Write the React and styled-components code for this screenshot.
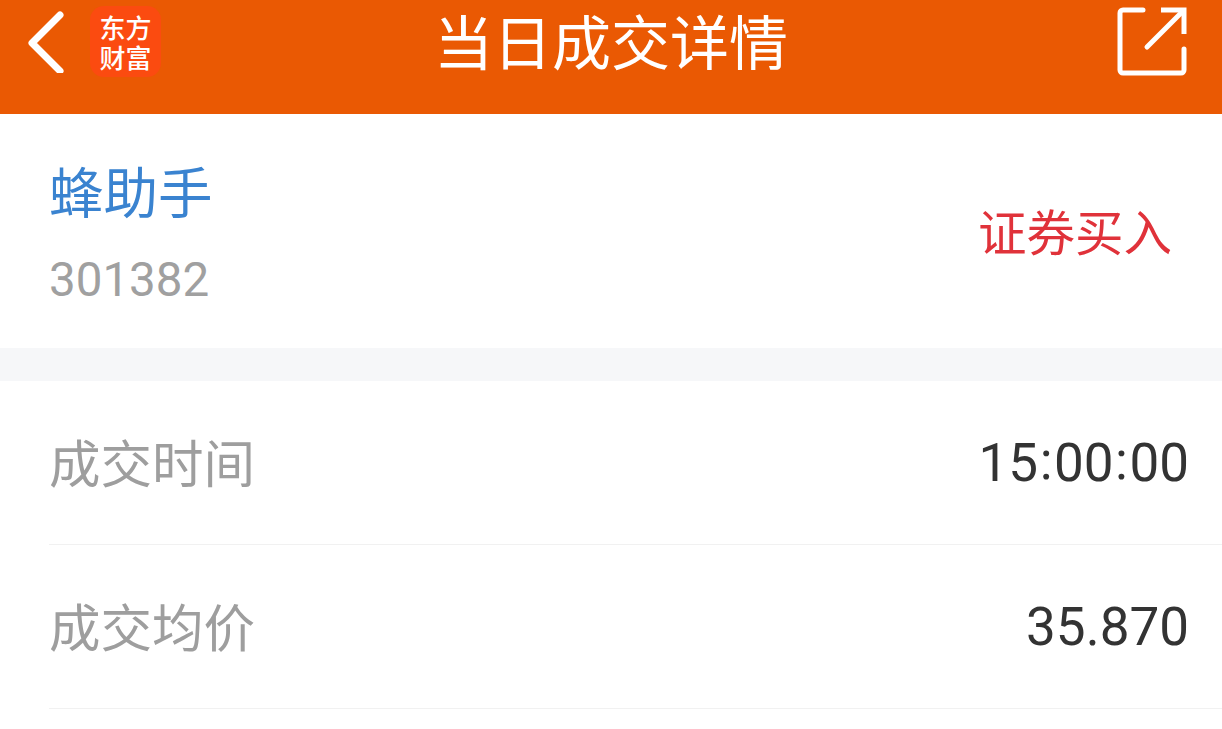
import React from "react";
import styled, { createGlobalStyle } from "styled-components";

const Global = createGlobalStyle`
  html, body { margin: 0; padding: 0; background: #fff; }
  body { font-family: "Roboto", "Noto Sans CJK SC", sans-serif; }
  #root { width: 1222px; height: 729px; overflow: hidden; }
`;

const Page = styled.div`
  width: 1222px;
  height: 729px;
  display: flex;
  flex-direction: column;
  background: #fff;
  overflow: hidden;
`;

const Header = styled.header`
  height: 114px;
  flex: none;
  background: #ea5903;
  display: flex;
  align-items: flex-start;
  position: relative;
`;

const BackIcon = styled.svg`
  width: 40px;
  height: 64px;
  margin: 9px 0 0 25px;
  flex: none;
`;

const Logo = styled.div`
  width: 71px;
  height: 71px;
  margin: 6px 0 0 25px;
  flex: none;
  border-radius: 14px;
  background: #fb4b10;
  color: #fff;
  font-family: "Noto Sans CJK SC", sans-serif;
  font-size: 26px;
  line-height: 30px;
  font-weight: 500;
  text-align: center;
  display: flex;
  align-items: center;
  justify-content: center;
`;

const Title = styled.h1`
  position: absolute;
  left: 0;
  right: 0;
  top: 0;
  height: 84px;
  margin: 0;
  text-align: center;
  color: #fff;
  font-family: "Noto Sans CJK SC", sans-serif;
  font-weight: 400;
  font-size: 59px;
  line-height: 80px;
`;

const ShareIcon = styled.svg`
  width: 72px;
  height: 72px;
  margin: 5px 33px 0 auto;
  flex: none;
`;

const StockBlock = styled.section`
  height: 234px;
  flex: none;
  display: flex;
  align-items: center;
  justify-content: space-between;
  padding: 0 50px 0 49px;
`;

const StockInfo = styled.div`
  display: flex;
  flex-direction: column;
  gap: 28px;
`;

const StockName = styled.div`
  font-family: "Noto Sans CJK SC", sans-serif;
  font-size: 54.5px;
  line-height: 70px;
  color: #3a83d0;
`;

const StockCode = styled.div`
  font-size: 47.5px;
  line-height: 54px;
  color: #a0a0a0;
`;

const TradeType = styled.div`
  font-family: "Noto Sans CJK SC", sans-serif;
  font-size: 48.5px;
  line-height: 64px;
  margin-top: -3px;
  color: #e0323a;
`;

const Divider = styled.div`
  height: 33px;
  flex: none;
  background: #f6f7f9;
`;

const Row = styled.div`
  height: 163px;
  flex: none;
  margin-left: 49px;
  padding-right: 33px;
  display: flex;
  align-items: center;
  justify-content: space-between;
  border-bottom: 1px solid #f1f1f1;
`;

const RowLabel = styled.div`
  font-family: "Noto Sans CJK SC", sans-serif;
  font-size: 51.5px;
  line-height: 66px;
  margin-top: -4px;
  color: #9e9e9e;
`;

const RowValue = styled.div`
  font-size: 53px;
  line-height: 60px;
  color: #333;
`;

const Colon = styled.span`
  display: inline-block;
  margin: 0 1.5px;
  position: relative;
  top: -2px;
`;

export default function App() {
  return (
    <Page>
      <Global />
      <Header>
        <BackIcon viewBox="0 0 40 64" fill="none">
          <path d="M35 6 L7 34 L35 62" stroke="#fff" strokeWidth="7" strokeLinecap="round" strokeLinejoin="round" />
        </BackIcon>
        <Logo>
          <span>东方<br />财富</span>
        </Logo>
        <Title>当日成交详情</Title>
        <ShareIcon viewBox="0 0 72 72" fill="none">
          <path d="M26 5 H6 a3 3 0 0 0 -3 3 V65 a3 3 0 0 0 3 3 H64 a3 3 0 0 0 3 -3 V44" stroke="#fff" strokeWidth="5" strokeLinecap="round" />
          <path d="M30 42 L65 7" stroke="#fff" strokeWidth="5" strokeLinecap="round" />
          <path d="M44 5 H67 V29" stroke="#fff" strokeWidth="5" />
        </ShareIcon>
      </Header>
      <StockBlock>
        <StockInfo>
          <StockName>蜂助手</StockName>
          <StockCode>301382</StockCode>
        </StockInfo>
        <TradeType>证券买入</TradeType>
      </StockBlock>
      <Divider />
      <Row>
        <RowLabel>成交时间</RowLabel>
        <RowValue>15<Colon>:</Colon>00<Colon>:</Colon>00</RowValue>
      </Row>
      <Row>
        <RowLabel>成交均价</RowLabel>
        <RowValue>35.870</RowValue>
      </Row>
    </Page>
  );
}
